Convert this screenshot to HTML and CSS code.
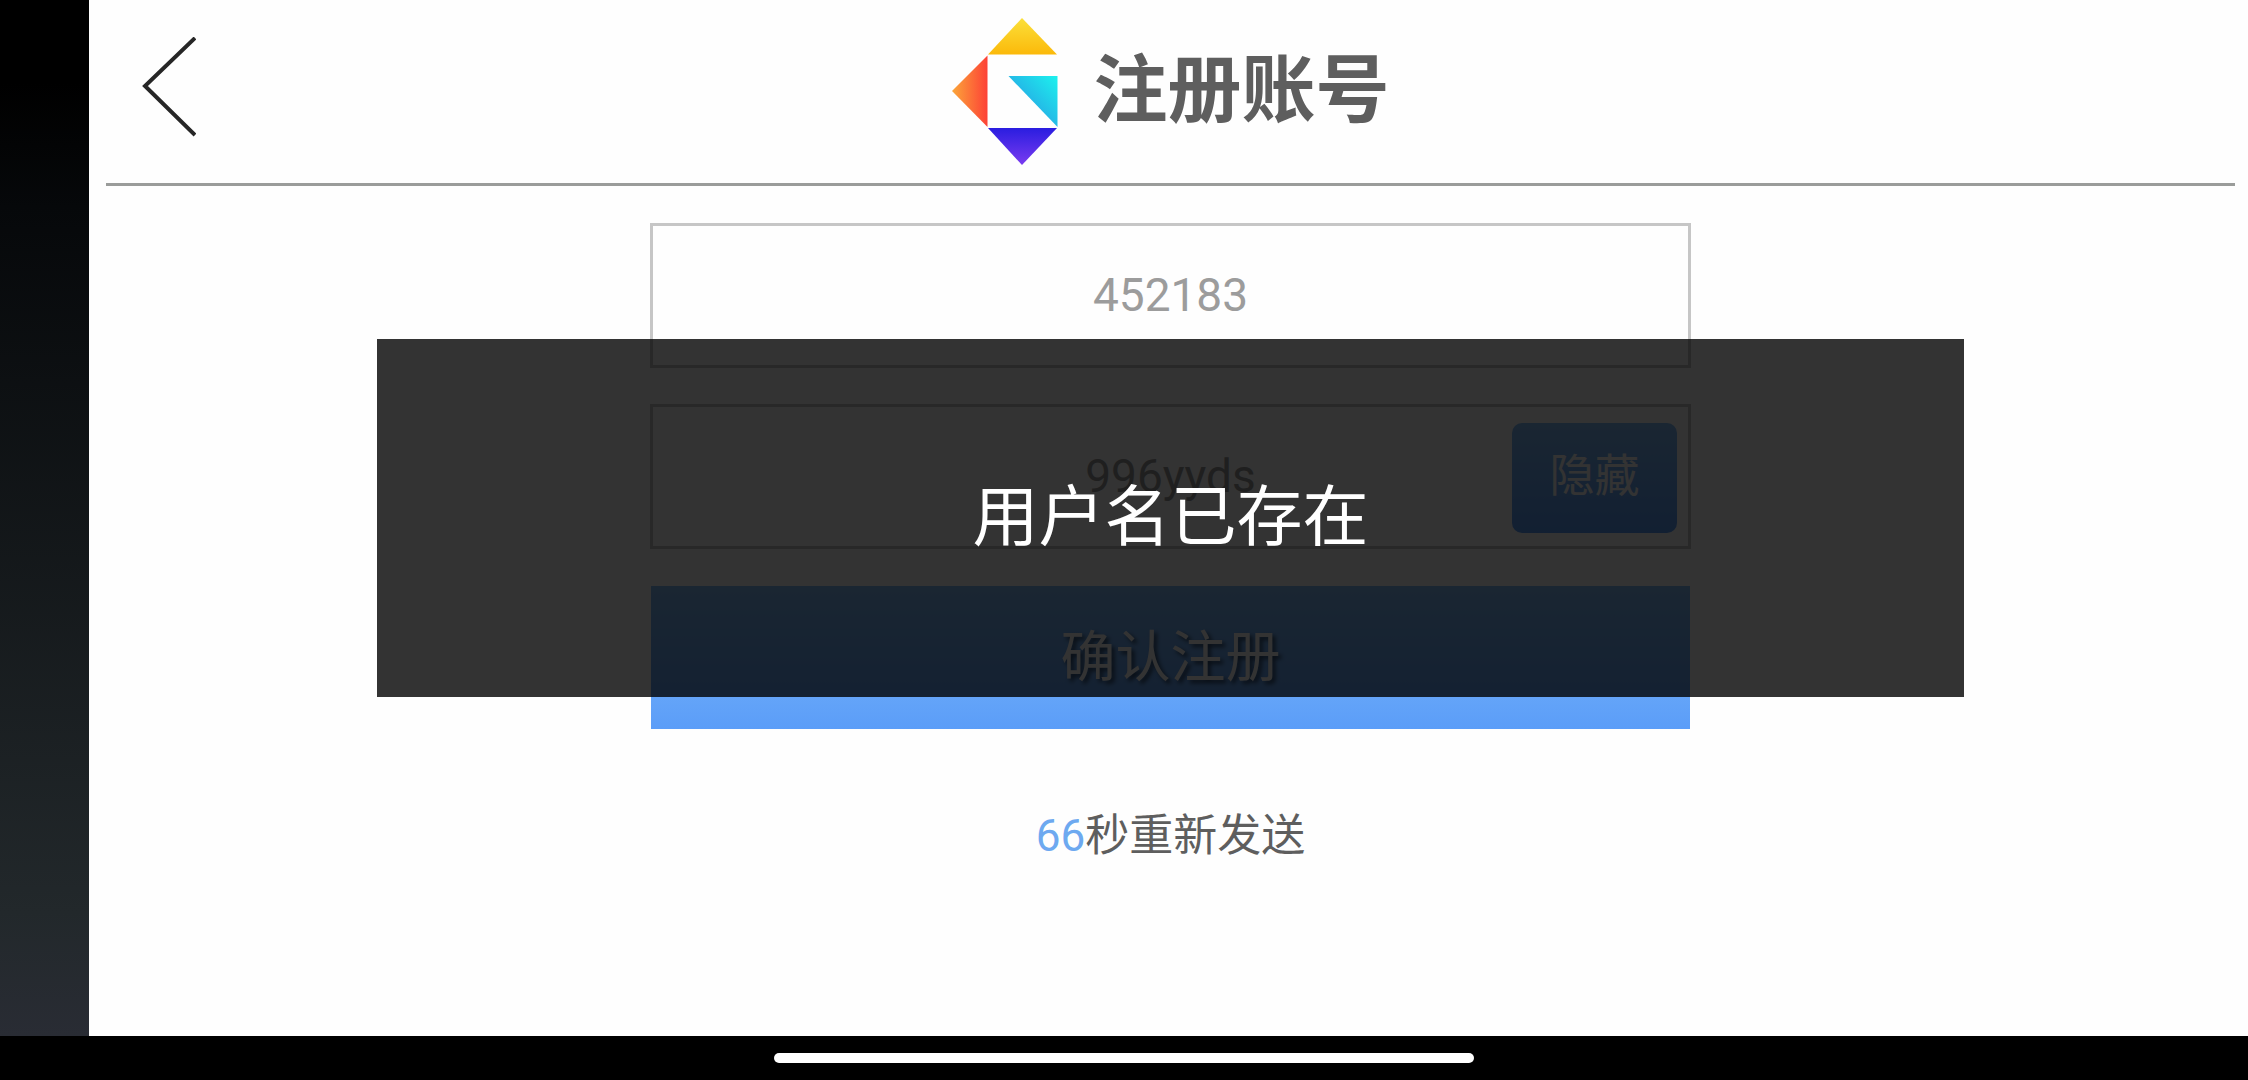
FILE: index.html
```html
<!DOCTYPE html>
<html lang="zh-CN">
<head>
  <meta charset="UTF-8">
  <meta name="viewport" content="width=device-width, initial-scale=1.0">
  <title>注册账号</title>
  <link rel="stylesheet" href="styles.css">
</head>
<body>
  <div class="screen">
    <div class="status-side"></div>
    <div class="page">
      <header class="header">
        <button class="btn-back" type="button" aria-label="返回">
          <svg width="54" height="100" viewBox="0 0 54 100" fill="none" stroke="#262626" stroke-width="4">
            <path d="M53 1 L3 49 L53 98"/>
          </svg>
        </button>
        <div class="brand">
          <svg class="logo" viewBox="0 0 106 148" aria-hidden="true">
            <defs>
              <linearGradient id="yellow" x1="0" y1="0" x2="0" y2="1">
                <stop offset="0" stop-color="#fbe03a"/>
                <stop offset="1" stop-color="#fbb90a"/>
              </linearGradient>
              <linearGradient id="red" x1="0" y1="0" x2="1" y2="0">
                <stop offset="0" stop-color="#fba63a"/>
                <stop offset="1" stop-color="#fd4136"/>
              </linearGradient>
              <linearGradient id="cyan" x1="1" y1="0" x2="0.3" y2="0.7">
                <stop offset="0" stop-color="#1cf2ee"/>
                <stop offset="1" stop-color="#27a5e4"/>
              </linearGradient>
              <linearGradient id="purple" x1="0" y1="0" x2="0" y2="1">
                <stop offset="0" stop-color="#2a1de0"/>
                <stop offset="1" stop-color="#7a3bf0"/>
              </linearGradient>
            </defs>
            <path fill="url(#yellow)" d="M70 0 L105 36.5 H36 Z"/>
            <path fill="url(#red)" d="M0 73 L35.5 37.5 V109 Z"/>
            <path fill="url(#cyan)" d="M56.5 58 H105.5 V109 Z"/>
            <path fill="url(#purple)" d="M36 110 H105 L70 147 Z"/>
          </svg>
          <h1>注册账号</h1>
        </div>
      </header>

      <form class="form">
        <div class="field">
          <input type="text" value="452183" aria-label="验证码">
        </div>
        <div class="field">
          <input type="text" value="996yyds" aria-label="密码" spellcheck="false">
          <button class="btn btn-toggle" type="button">隐藏</button>
        </div>
        <button class="btn btn-submit" type="button">确认注册</button>
      </form>
      <p class="resend"><span class="seconds">66</span>秒重新发送</p>

      <div class="toast" role="alert">用户名已存在</div>
    </div>
  </div>
  <div class="nav-bar"><span class="nav-handle"></span></div>
</body>
</html>
```
FILE: styles.css
```css
* {
  box-sizing: border-box;
}
body {
  display: flex;
  flex-direction: column;
  min-height: 100vh;
  margin: 0;
  background: #000;
  color: #5e5e5e;
  font-family: Roboto, "Noto Sans CJK SC", sans-serif;
}
button,
input {
  font-family: inherit;
}

.screen {
  flex: 1;
  display: flex;
}
.status-side {
  width: 89px;
  background: linear-gradient(#000 8%, #06080a 20%, #22282b 88%, #292c34);
}
.page {
  position: relative;
  flex: 1;
  padding: 0 13px 0 17px;
  background: #fefefe;
}

.header {
  display: grid;
  grid-template-columns: 1fr auto 1fr;
  align-items: center;
  height: 186px;
  border-bottom: 3px solid #9a9c9a;
}
.btn-back {
  justify-self: start;
  margin: 0 0 10px 36px;
  padding: 0;
  border: none;
  background: none;
  cursor: pointer;
}
.btn-back svg {
  display: block;
}
.brand {
  display: flex;
  align-items: center;
  gap: 36px;
}
.logo {
  width: 106px;
  height: 148px;
}
.brand h1 {
  margin: 0;
  padding-bottom: 2px;
  font-size: 74px;
  line-height: 88px;
  font-weight: bold;
}

.form {
  display: flex;
  flex-direction: column;
  gap: 36px;
  max-width: 1041px;
  margin: 37px auto 0;
}
.field {
  position: relative;
}
.field input {
  display: block;
  width: 100%;
  height: 145px;
  padding: 0 0 2px;
  border: 3px solid #c6c6c6;
  border-radius: 0;
  outline: none;
  background: transparent;
  color: #9c9c9c;
  font-size: 46px;
  text-align: center;
}
.btn {
  padding: 0 0 12px;
  border: none;
  background: linear-gradient(#82bdfa, #5b9df8);
  color: #fff;
  cursor: pointer;
}
.btn-toggle {
  position: absolute;
  top: 19px;
  right: 14px;
  width: 165px;
  height: 110px;
  border-radius: 10px;
  font-size: 45px;
}
.btn-submit {
  height: 143px;
  margin: 1px;
  font-size: 55px;
  text-shadow: 3px 3px 4px rgba(0, 0, 0, .6);
}

.resend {
  margin: 73px 0 0;
  font-size: 44px;
  line-height: 66px;
  text-align: center;
}
.seconds {
  color: #6da9f0;
}

.toast {
  position: absolute;
  top: 50%;
  left: 17px;
  right: 13px;
  display: flex;
  justify-content: center;
  align-items: center;
  max-width: 1587px;
  height: 358px;
  margin: 0 auto;
  padding-bottom: 14px;
  background: rgba(0, 0, 0, .8);
  color: #fff;
  font-size: 66px;
  transform: translateY(-50%);
}

.nav-bar {
  display: flex;
  justify-content: center;
  align-items: center;
  height: 44px;
}
.nav-handle {
  width: 700px;
  height: 10px;
  border-radius: 5px;
  background: #fff;
}
```
